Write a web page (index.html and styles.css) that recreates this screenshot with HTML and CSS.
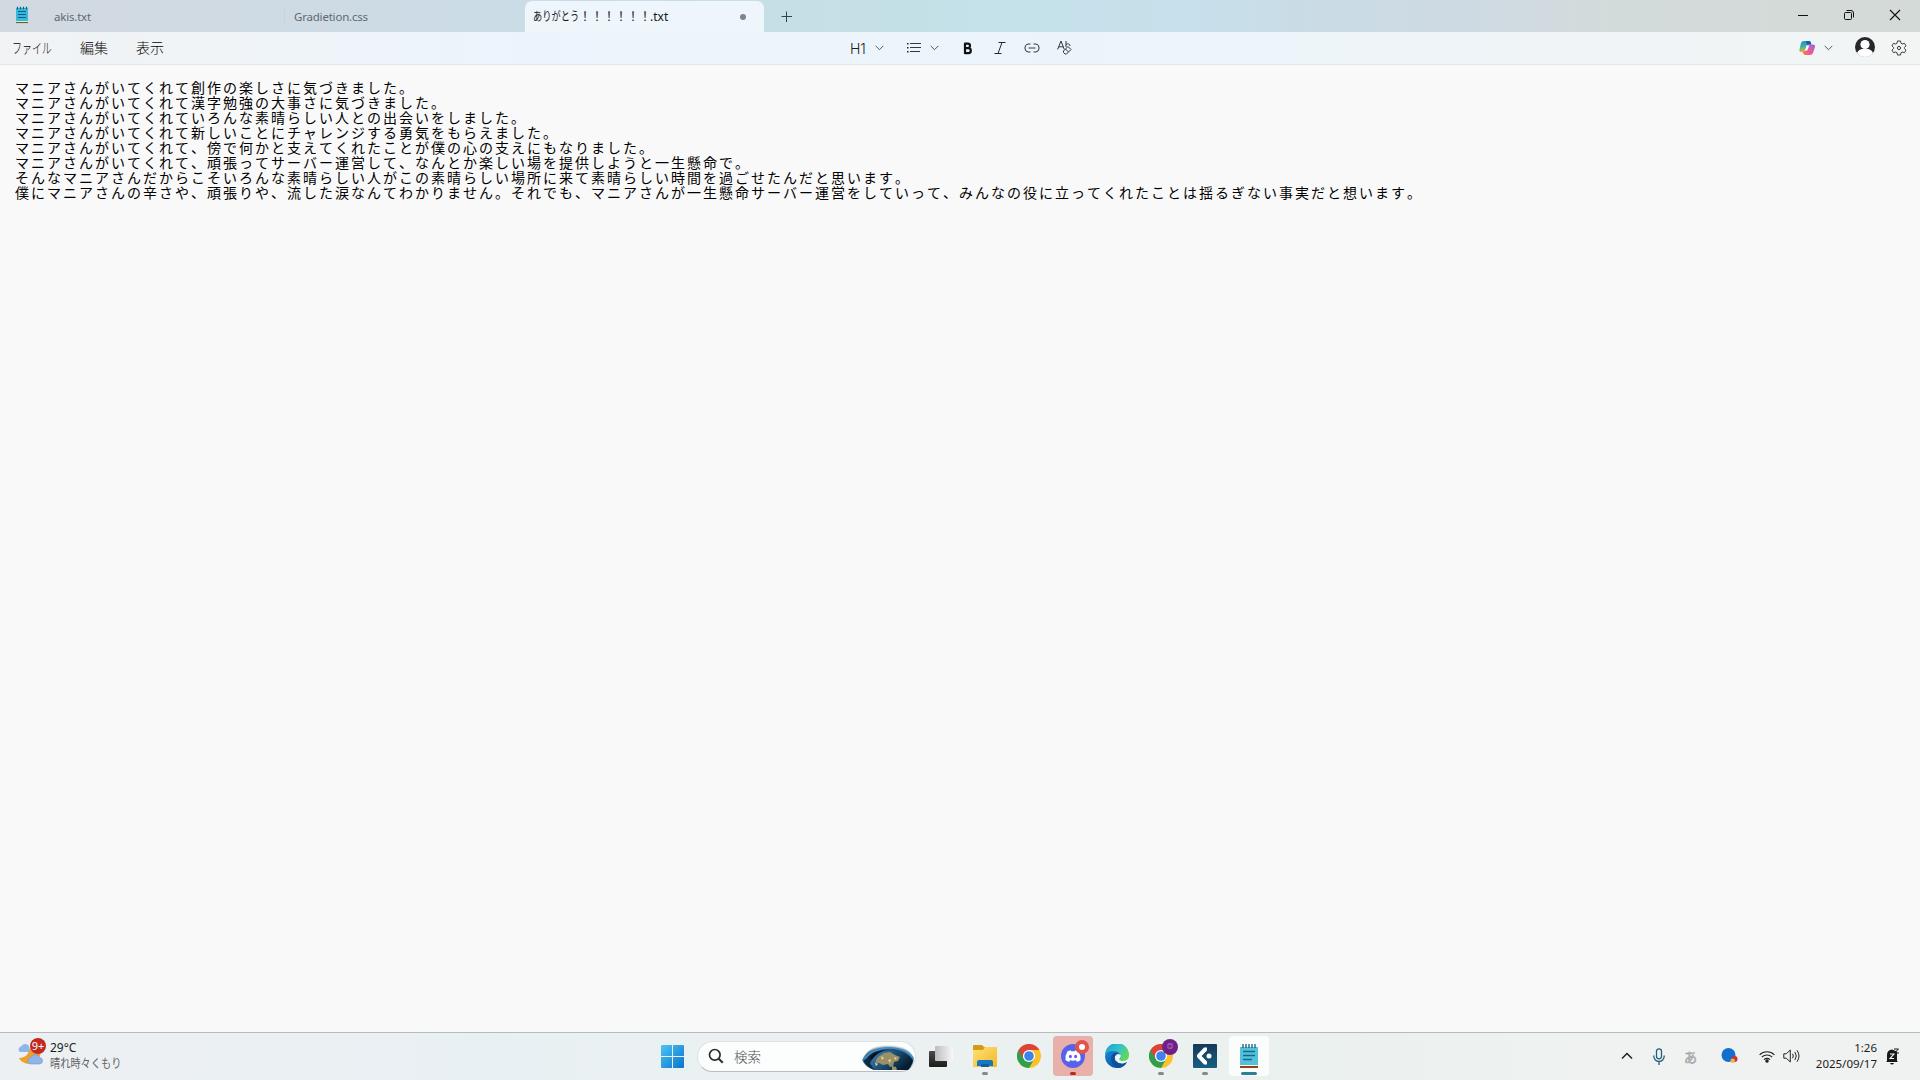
FILE: index.html
```html
<!DOCTYPE html>
<html lang="ja">
<head>
  <meta charset="UTF-8" />
  <meta name="viewport" content="width=device-width, initial-scale=1.0"/>
  <title>ありがとう！！！！！！.txt</title>
  <link rel="stylesheet" href="styles.css">
</head>
<body>

  <header class="titlebar">
    <svg class="app-icon" width="14" height="18" viewBox="0 0 14 18">
      <rect x="1" y="2" width="12" height="14" fill="#38b8dc"/>
      <path d="M1 15.5h12" stroke="#eef6da" stroke-width="1"/>
      <path d="M1 16.5h12" stroke="#6c6328" stroke-width="1.2"/>
      <path d="M2.5 .8v2.4M5.5 .8v2.4M8.5 .8v2.4M11.5 .8v2.4" stroke="#0b607c" stroke-width="1.2"/>
      <path d="M3 5.5h8M3 8.5h8M3 11.5h8" stroke="#07617f" stroke-width="1"/>
    </svg>
    <div class="tab">akis.txt</div>
    <div class="tab tab-second">Gradietion.css</div>
    <div class="tab tab-active">
      <span class="narrow tab-kana">ありがとう</span><span class="tab-marks">！！！！！！</span>.txt
      <i class="unsaved"></i>
    </div>
    <svg class="new-tab" width="12" height="12" viewBox="0 0 12 12"><path d="M5.5 .5v10.500M.5 5.500h10.500" stroke="#33424a" fill="none"/></svg>
    <div class="window-controls">
      <svg width="12" height="12" viewBox="0 0 12 12"><path d="M1 6.5h10" stroke="#111" fill="none"/></svg>
      <svg width="12" height="12" viewBox="0 0 12 12" fill="none" stroke="#111"><rect x="1.5" y="3.5" width="7" height="7" rx="1"/><path d="M3.5 1.5H8a2.5 2.5 0 0 1 2.5 2.5v4.500"/></svg>
      <svg width="12" height="12" viewBox="0 0 12 12"><path d="M1 1l10 10M11 1L1 11" stroke="#111" stroke-width="1.1" fill="none"/></svg>
    </div>
  </header>

  <nav class="menubar">
    <div class="menus">
      <span class="menu-file"><span class="narrow menu-kana">ファイル</span></span>
      <span class="menu-item">編集</span>
      <span class="menu-item">表示</span>
    </div>
    <div class="format">
      <span class="heading">H1</span>
      <svg class="chev" width="9" height="6" viewBox="0 0 9 6"><path d="M.7.9l3.800 3.800L8.300.9"/></svg>
      <svg class="list" width="16" height="12" viewBox="0 0 16 12"><path d="M4 1.500h11M4 5.500h11M4 9.500h10" stroke="#333b40" fill="none"/><path d="M1 1h1.500v1.500H1zM1 5h1.500v1.500H1zM1 9h1.500v1.500H1z" fill="#222"/></svg>
      <svg class="chev" width="9" height="6" viewBox="0 0 9 6"><path d="M.7.9l3.800 3.800L8.300.9"/></svg>
      <svg class="bold" width="10" height="13" viewBox="0 0 10 13"><path d="M2 1.700h2.800a2.200 2.200 0 0 1 0 4.400H2zM2 6.200h3.300a2.500 2.500 0 0 1 0 5H2z" stroke="#111" stroke-width="2.200" fill="none" stroke-linejoin="round"/></svg>
      <svg class="italic" width="12" height="14" viewBox="0 0 12 14"><path d="M4.500 1.500h7M.5 12.500h7M8 1.500L4 12.500" stroke="#222a2e" fill="none"/></svg>
      <svg class="link" width="16" height="10" viewBox="0 0 16 10"><path d="M6.500 1H5a4 4 0 0 0 0 8h1.500M9.500 1H11a4 4 0 0 1 0 8H9.500M4.500 5h7" stroke="#343c40" stroke-width="1.100" fill="none"/></svg>
      <svg class="clear" width="16" height="16" viewBox="0 0 16 16" fill="none" stroke="#2d3539"><path d="M.6 9.500L4 1l3.300 8.500M1.800 6.800h4.500M9 1v6M9 5c1-1.900 4-1.500 4 1M6.500 11l4.500-4.500 3 3-4.500 4.500H8l-1.500-1.500zM8.500 9l3 3"/></svg>
    </div>
    <div class="account">
      <svg width="18" height="16" viewBox="0 0 18 16">
        <defs>
          <linearGradient id="copilot-a" x1="0" y1="0" x2=".3" y2="1"><stop offset="0" stop-color="#168bd0"/><stop offset=".5" stop-color="#35aeb0"/><stop offset="1" stop-color="#e9bd25"/></linearGradient>
          <linearGradient id="copilot-b" x1="1" y1="0" x2="0" y2="1"><stop offset="0" stop-color="#9569e5"/><stop offset=".5" stop-color="#e45a9e"/><stop offset="1" stop-color="#ff7940"/></linearGradient>
        </defs>
        <path d="M6 1h5q1.500 0 2 2l.3 1.500H11q-2 0-2.500 2L7.500 10q-.5 2-2.500 2H3Q1 12 1.500 9.500L3 3Q3.700 1 6 1z" fill="url(#copilot-a)"/>
        <path d="M12 15H7.500q-2 0-2.500-2l-.3-1.500H6q1.700 0 2.200-2l1-3q.5-2 2.500-2H15q2.500 0 2 2.500l-2 6Q14.300 15 12 15z" fill="url(#copilot-b)"/>
        <path d="M8 1h3q1.500 0 2 2l.3 1.500H11q-1.200 0-1.800 1z" fill="#1759b7"/>
        <path d="M8.700 5.500h2.600L9.300 10.500H6.900z" fill="#f5f7fa"/>
      </svg>
      <svg class="chev" width="9" height="6" viewBox="0 0 9 6"><path d="M.7.9l3.800 3.800L8.300.9"/></svg>
      <svg class="avatar" width="20" height="20" viewBox="0 0 20 20"><circle cx="10" cy="10" r="10" fill="#24282a"/><circle cx="10" cy="7.500" r="4.600" fill="#fff"/><path d="M2 16q1.500-3.500 5-4h6q3.500.5 5 4a10 10 0 0 1-16 0z" fill="#fff"/></svg>
      <svg width="16" height="16" viewBox="0 0 16 16" fill="none" stroke="#3a3d3e" stroke-linejoin="round"><path d="M6.500 1h3l.5 2.200 1.300.8 2.200-.7L15 5.900 13.400 7.500v1L15 10.100l-1.500 2.600-2.200-.7-1.300.8-.5 2.200h-3L6 12.800 4.700 12l-2.200.7L1 10.100l1.600-1.600v-1L1 5.900l1.500-2.600 2.200.7L6 3.200z"/><circle cx="8" cy="8" r="1.600"/></svg>
    </div>
  </nav>

  <main class="editor">
    <p>マニアさんがいてくれて創作の楽しさに気づきました。</p>
    <p>マニアさんがいてくれて漢字勉強の大事さに気づきました。</p>
    <p>マニアさんがいてくれていろんな素晴らしい人との出会いをしました。</p>
    <p>マニアさんがいてくれて新しいことにチャレンジする勇気をもらえました。</p>
    <p>マニアさんがいてくれて、傍で何かと支えてくれたことが僕の心の支えにもなりました。</p>
    <p>マニアさんがいてくれて、頑張ってサーバー運営して、なんとか楽しい場を提供しようと一生懸命で。</p>
    <p>そんなマニアさんだからこそいろんな素晴らしい人がこの素晴らしい場所に来て素晴らしい時間を過ごせたんだと思います。</p>
    <p>僕にマニアさんの辛さや、頑張りや、流した涙なんてわかりません。それでも、マニアさんが一生懸命サーバー運営をしていって、みんなの役に立ってくれたことは揺るぎない事実だと想います。</p>
  </main>

  <footer class="taskbar">
    <div class="weather">
      <div class="weather-icon">
        <svg width="27" height="28" viewBox="0 0 27 28">
          <path d="M22 9a10 10 0 0 1-20 11q8 0 10-7z" fill="#eda02c"/>
          <path d="M12 11l11-2v8H12z" fill="#eda02c"/>
          <path d="M3 14a3 3 0 0 1 1-5.500 4.500 4.500 0 0 1 8.500 1.500v4z" fill="#8fb6ea"/>
          <path d="M13 26a3.500 3.500 0 0 1 .5-6.500 5 5 0 0 1 9 0 3.300 3.300 0 0 1 .5 6.500z" fill="#91b4e8" stroke="#6f98d4" stroke-width=".6"/>
        </svg>
        <span class="weather-badge">9+</span>
      </div>
      <div class="weather-text">
        <div>29°C</div>
        <div class="narrow weather-desc">晴れ時々くもり</div>
      </div>
    </div>

    <div class="apps">
      <svg class="start" width="24" height="24" viewBox="0 0 24 24">
        <defs><linearGradient id="win" x1="0" y1="0" x2="1" y2="1"><stop offset="0" stop-color="#4cc5f3"/><stop offset="1" stop-color="#0873cc"/></linearGradient></defs>
        <path d="M2 1H12V12H1V2a1 1 0 0 1 1-1zM13 1h10a1 1 0 0 1 1 1v10H13zM1 13h11v11H2a1 1 0 0 1-1-1zM13 13h11v10a1 1 0 0 1-1 1H13z" fill="url(#win)"/>
      </svg>
      <div class="search">
        <svg width="16" height="16" viewBox="0 0 16 16"><circle cx="6.800" cy="6.800" r="5.300" fill="none" stroke="#292d2f" stroke-width="1.700"/><path d="M10.700 10.700l4 4" stroke="#292d2f" stroke-width="2"/></svg>
        <span>検索</span>
        <svg class="earth" width="54" height="28" viewBox="0 0 54 28">
          <defs>
            <radialGradient id="sky" cx=".5" cy=".62" r=".6"><stop offset=".6" stop-color="#06121e"/><stop offset=".8" stop-color="#38536b" stop-opacity=".75"/><stop offset="1" stop-color="#dbe6ec" stop-opacity="0"/></radialGradient>
            <linearGradient id="globe" x1="0" y1="0" x2="1" y2=".5"><stop offset="0" stop-color="#3f8fca"/><stop offset=".5" stop-color="#1e527c"/><stop offset="1" stop-color="#061d31"/></linearGradient>
          </defs>
          <path d="M1 17Q8 2 26 1q20 0 27 14 0 6-5 12H13Q4 24 1 17z" fill="url(#sky)"/>
          <path d="M2 17Q5 24 13 27h8L9 15z" fill="#0b2d46"/>
          <path d="M9 20Q16 7 30 7q15 0 22 10-1 6-5 10H13z" fill="url(#globe)"/>
          <path d="M2 17Q12 5 29 5q16 0 23 10" fill="none" stroke="#2e94dc" stroke-width="1.500"/>
          <path d="M17 14l6-4 6-1 5 3 5 2-2 4-4 1-1 4-3 1-2-3-5 1-4-2-4 1 1-4zM31 23l4 1 1 3h-5z" fill="#9a9067"/>
          <path d="M20 13l3 2-2 2zM27 17l3-1-1 4zM14 20l3 1-2 2zM33 14l3 1-2 2z" fill="#f1d28a"/>
        </svg>
      </div>
      <svg class="taskview" width="26" height="24" viewBox="0 0 26 24">
        <defs>
          <linearGradient id="tv-back" x1="0" y1="0" x2="0" y2="1"><stop offset="0" stop-color="#4a4a4a"/><stop offset="1" stop-color="#1c1c1c"/></linearGradient>
          <linearGradient id="tv-front" x1="0" y1="0" x2="1" y2="0"><stop offset="0" stop-color="#bcbcbc"/><stop offset="1" stop-color="#f8f8f8"/></linearGradient>
        </defs>
        <rect x="1" y="7" width="18" height="16" rx="1" fill="url(#tv-back)"/><rect x="7" y="2" width="18" height="15" rx="1" fill="url(#tv-front)"/>
      </svg>

      <div class="app running">
        <svg width="24" height="24" viewBox="0 0 24 24">
          <defs><linearGradient id="folder" x1="0" y1="0" x2="1" y2="1"><stop offset="0" stop-color="#ffe07b"/><stop offset="1" stop-color="#f2b821"/></linearGradient></defs>
          <path d="M0 2q0-1 1-1h8l2 2h12v5H0z" fill="#d69a14"/><path d="M0 6h10l2-3h11q1 0 1 1v18q0 1-1 1H1q-1 0-1-1z" fill="url(#folder)"/>
          <path d="M4 22v-4q0-2 2-2h12q2 0 2 2v4z" fill="#1778c0"/><path d="M8 21q0-1 1-1h6q1 0 1 1v2H8z" fill="#0f5f9f"/>
        </svg>
      </div>
      <div class="app">
        <svg width="24" height="24" viewBox="0 0 24 24">
          <g id="chrome"><circle cx="12" cy="12" r="12" fill="#fbc22b"/><path d="M12 12L1.600 6A12 12 0 0 0 12 24l5.200-9z" fill="#2f9e4f"/><path d="M12 6h10.400A12 12 0 0 0 1.600 6l5.200 9z" fill="#dd4437"/><circle cx="12" cy="12" r="6.100" fill="#fff"/><circle cx="12" cy="12" r="4.800" fill="#3d83ed"/></g>
        </svg>
      </div>
      <div class="app running alert">
        <svg width="24" height="24" viewBox="0 0 24 24">
          <circle cx="12" cy="12" r="12" fill="#5662e9"/>
          <path d="M6.500 7.300Q8 6.500 9.700 6.200l.6 1h3.400l.6-1q1.700.3 3.200 1.100Q20 11.500 19.500 16q-1.700 1.400-3.700 1.800l-.9-1.500q-2.900.8-5.800 0l-.9 1.500Q6.200 17.400 4.500 16 4 11.500 6.500 7.300z" fill="#fff"/>
          <ellipse cx="9.400" cy="12.500" rx="1.500" ry="1.700" fill="#5662e9"/><ellipse cx="14.600" cy="12.500" rx="1.500" ry="1.700" fill="#5662e9"/>
        </svg>
        <i class="badge badge-live"></i>
      </div>
      <div class="app">
        <svg width="24" height="24" viewBox="0 0 24 24">
          <defs>
            <linearGradient id="edge-top" x1="0" y1="0" x2="1" y2=".5"><stop offset="0" stop-color="#1a9bd7"/><stop offset=".6" stop-color="#32c5c8"/><stop offset="1" stop-color="#62d65c"/></linearGradient>
            <linearGradient id="edge-low" x1="0" y1="0" x2="1" y2="1"><stop offset="0" stop-color="#1587d6"/><stop offset="1" stop-color="#0b438e"/></linearGradient>
          </defs>
          <path d="M0 11A12 12 0 0 1 24 11q0 6-6 6-4 0-4-2 2-2 1-5Q9 4 0 11z" fill="url(#edge-top)"/>
          <path d="M0 12Q1 7 8 7q6 0 7.500 4Q12 9 10 12q-2 5 4 8 4 1 8-2-3 6-10 6A12 12 0 0 1 0 12z" fill="url(#edge-low)"/>
          <path d="M6 14q1-6 7-5-5 3-2.500 7.500Q14 21 22 18q-3 5-8 6-8-2-8-10z" fill="#0d4f9d"/>
          <path d="M11 12q2-3 4.500-1 .5 2-1.500 4 0 2 4 2 3 0 5-1.500-2 4-6 4-6-1-6-7.500z" fill="#eef6f7"/>
        </svg>
      </div>
      <div class="app running">
        <svg width="24" height="24" viewBox="0 0 24 24"><use href="#chrome"/></svg>
        <i class="badge badge-profile">◎</i>
      </div>
      <div class="app running">
        <svg width="24" height="24" viewBox="0 0 24 24">
          <defs><linearGradient id="navy" x1="0" y1="0" x2="0" y2="1"><stop offset="0" stop-color="#143a58"/><stop offset="1" stop-color="#185d83"/></linearGradient></defs>
          <rect width="24" height="24" rx="1" fill="url(#navy)"/><path d="M11 3.500h3v3L8.500 12l5.500 5.500v3h-3L4 13v-2z" fill="#fff"/><circle cx="16" cy="12" r="2.500" fill="#fff"/>
        </svg>
      </div>
      <div class="app running current">
        <svg width="20" height="26" viewBox="0 0 20 26">
          <path d="M1 4h18v18H1z" fill="#53c1dc"/><path d="M1 22h18v1H1z" fill="#fff4dc"/><path d="M1 23h18v2H1z" fill="#91421c"/>
          <path d="M4 1v4M7 1v4M10 1v4M13 1v4M16 1v4" stroke="#175b72" stroke-width="1.300"/><path d="M4 8.500h12M4 12.500h12M4 16.500h9" stroke="#126a88" stroke-width="1.400"/>
        </svg>
      </div>
    </div>

    <div class="tray">
      <svg class="tray-up" width="12" height="8" viewBox="0 0 12 8"><path d="M1 6.500l5-5 5 5" fill="none" stroke="#222" stroke-width="1.500"/></svg>
      <svg class="tray-mic" width="12" height="17" viewBox="0 0 12 17" fill="none" stroke="#236079" stroke-width="1.300"><rect x="3.500" y=".8" width="5" height="10" rx="2.500"/><path d="M.8 7.500v.8a5.200 5.200 0 0 0 10.400 0v-.8M6 13.500V17"/></svg>
      <span class="ime">あ</span>
      <svg class="tray-ball" width="17" height="16" viewBox="0 0 17 16"><circle cx="7.500" cy="7" r="7" fill="#126fd0"/><circle cx="13.500" cy="11" r="3" fill="#c53030"/><circle cx="11.700" cy="12.700" r="2.300" fill="#f0b548"/></svg>
      <svg class="tray-wifi" width="16" height="13" viewBox="0 0 16 13" fill="none" stroke="#222" stroke-width="1.100"><path d="M.6 4.800a10.400 10.400 0 0 1 14.800 0M2.800 7.200a7.300 7.300 0 0 1 10.400 0M5 9.600a4.200 4.200 0 0 1 6 0"/><circle cx="8" cy="11" r="1.200" fill="#222"/></svg>
      <svg class="tray-volume" width="17" height="14" viewBox="0 0 17 14" fill="none" stroke="#222" stroke-linejoin="round"><path d="M.8 4.800h2.500L7.300 1v12L3.300 9.200H.8zM9.600 4.800q1.400 2.200 0 4.400M11.900 3q2.800 4 0 8M14 1.300q4 5.700 0 11.400"/></svg>
      <div class="clock"><div>1:26</div><div>2025/09/17</div></div>
      <svg class="tray-bell" width="15" height="17" viewBox="0 0 15 17"><path d="M2 13V7q0-5 5-5.500l5 2V13l1 1H1z" fill="#191919"/><path d="M5 15h4q-.5 1.500-2 1.500T5 15z" fill="#191919"/><path d="M5 6h4L5 10.500h4" fill="none" stroke="#fff" stroke-width="1.100"/><path d="M9 1h4.500L9.500 5H14" fill="none" stroke="#191919"/></svg>
    </div>
  </footer>

</body>
</html>
```
FILE: styles.css
```css
:root {
  --editor: #f9f9f9;
  --ink: #1b1e20;
  --muted: #5f696f;
}

* {
  box-sizing: border-box;
}

body {
  margin: 0;
  height: 100vh;
  display: flex;
  flex-direction: column;
  overflow: hidden;
  font-family: 'Noto Sans', 'Noto Sans CJK JP', sans-serif;
  font-size: 12px;
  color: var(--ink);
  background: var(--editor);
}

svg {
  display: block;
  flex: none;
}

/* squeezed kana, like the narrow UI face */
.narrow {
  display: inline-block;
  white-space: nowrap;
  transform-origin: left center;
}

/* title bar */
.titlebar {
  height: 32px;
  flex: none;
  display: flex;
  align-items: center;
  background: linear-gradient(90deg, #d2d9e0 0, #cddbe5 20%, #c9dde7 32%, #c4e0e6 45%, #c5e1ea 54%, #c7e0eb 62%, #cadbe5 69%, #cfdae2 78%, #d3dbda 84%, #d4dad8);
}

.app-icon {
  margin: 0 24px 8px 15px;
  align-self: flex-end;
}

.tab {
  width: 231px;
  padding: 2px 0 0 1px;
  font-size: 11.500px;
  line-height: 30px;
  letter-spacing: -.2px;
  color: var(--muted);
}

.tab-second {
  width: 241px;
  height: 18px;
  padding: 0 0 0 9px;
  border-left: 1px solid #c5d2d9;
  line-height: 20px;
}

.tab-active {
  width: 239px;
  height: 31px;
  margin-top: 1px;
  padding: 1px 0 0 8px;
  display: flex;
  align-items: center;
  border-radius: 7px 7px 0 0;
  background: #eef5fb;
  color: #15191b;
  font-size: 12px;
  letter-spacing: 0;
}

.tab-kana {
  width: 46px;
  transform: scaleX(.77);
}

.tab-marks {
  width: 71px;
}

.unsaved {
  width: 6px;
  height: 6px;
  margin: 0 18px 0 auto;
  border-radius: 50%;
  background: #7d858a;
}

.new-tab {
  margin: 1px 0 0 17px;
}

.window-controls {
  display: flex;
  gap: 34px;
  margin: 0 19px 3px auto;
}

/* menu bar */
.menubar {
  height: 33px;
  flex: none;
  display: grid;
  grid-template-columns: 849px 1fr auto;
  align-items: center;
  border-bottom: 1px solid #e0e6e9;
  background: linear-gradient(90deg, #f1f3f5 0, #eff4f8 15%, #ebf4fd 28%, #eef5fa 36%, #ecf4fc 50%, #edf5fa 65%, #f0f4f7 82%, #f2f5f4);
}

.menus {
  display: flex;
  padding: 0 0 2px 12px;
  font-size: 14px;
  font-weight: 300;
  color: #000;
}

.menu-file {
  width: 68px;
}

.menu-kana {
  transform: scaleX(.71);
}

.menu-item {
  width: 56px;
}

.format {
  display: flex;
  align-items: center;
}

.heading {
  width: 19px;
  padding-left: 1px;
  font-family: Inter, sans-serif;
  font-size: 14px;
  font-weight: 300;
}

.chev {
  fill: none;
  stroke: #50585c;
}

.format .chev {
  margin-left: 7px;
}

.list {
  margin-left: 22px;
}

.format .list + .chev {
  margin-left: 8px;
}

.bold {
  margin-left: 24px;
}

.italic {
  margin-left: 21px;
}

.link {
  margin-left: 18px;
}

.clear {
  margin-left: 17px;
}

.account {
  display: flex;
  align-items: center;
  margin-right: 13px;
}

.account .chev {
  margin-left: 8px;
}

.avatar {
  margin: 0 16px 2px 22px;
}

/* text area */
.editor {
  flex: 1;
  padding: 15px 0 0 15px;
  font-family: 'Noto Sans CJK JP', sans-serif;
  font-size: 14px;
  line-height: 15px;
  letter-spacing: 2px;
  font-kerning: none;
  text-spacing-trim: space-all;
  color: #000;
}

.editor p {
  margin: 0;
  white-space: nowrap;
}

/* taskbar */
.taskbar {
  height: 48px;
  flex: none;
  display: grid;
  grid-template-columns: 660px 1fr auto;
  border-top: 1px solid #b7babc;
  background: linear-gradient(90deg, #edf0f2 0, #e9f0f3 25%, #ebf1f2 45%, #ebf1ee 68%, #eff2f1 85%, #f0f2f1);
}

.weather {
  display: flex;
  padding: 5px 0 0 17px;
}

.weather-icon {
  position: relative;
  width: 33px;
}

.weather-badge {
  position: absolute;
  top: 0;
  left: 13px;
  width: 16px;
  height: 16px;
  border-radius: 50%;
  background: #bf2b20;
  color: #fff;
  font-size: 11px;
  line-height: 16px;
  text-align: center;
}

.weather-text {
  padding-top: 2px;
  line-height: 16px;
}

.weather-desc {
  color: #5d6264;
  transform: scaleX(.85);
}

.apps {
  display: flex;
  align-items: center;
  padding-bottom: 1px;
}

.search {
  position: relative;
  width: 219px;
  height: 31px;
  margin-left: 13px;
  padding: 0 0 1px 10px;
  display: flex;
  align-items: center;
  gap: 10px;
  border: 1px solid #dde2e3;
  border-bottom-color: #b9bfc1;
  border-radius: 16px;
  background: #fcfdfd;
  color: #4c5154;
  font-size: 13.500px;
  font-weight: 300;
}

.earth {
  position: absolute;
  right: 0;
  top: 1px;
}

.taskview {
  margin: 0 9px 0 12px;
}

.app {
  position: relative;
  width: 40px;
  height: 40px;
  margin: 0 2px;
  display: flex;
  align-items: center;
  justify-content: center;
  border-radius: 4px;
}

.running::after {
  content: "";
  position: absolute;
  bottom: 1px;
  left: 17px;
  width: 6px;
  height: 3px;
  border-radius: 2px;
  background: #858989;
}

.alert {
  background: #e8afab;
}

.alert::after {
  background: #b72b20;
}

.current {
  background: #fbfcfc;
}

.current::after {
  left: 12px;
  width: 16px;
  background: #307e91;
}

.badge {
  position: absolute;
  border-radius: 50%;
  font-style: normal;
}

.badge-live {
  top: 4px;
  right: 4px;
  width: 14px;
  height: 14px;
  border: 4px solid #e1544c;
  background: #fff;
}

.badge-profile {
  top: 3px;
  right: 3px;
  width: 16px;
  height: 16px;
  background: #701f88;
  color: #e7c7ef;
  font-size: 6px;
  line-height: 15px;
  text-align: center;
}

.tray {
  display: flex;
  align-items: center;
  padding: 0 20px 1px 0;
}

.tray-mic {
  margin-left: 20px;
}

.ime {
  width: 14px;
  margin-left: 19px;
  font-size: 13px;
  color: #f5f5f5;
  -webkit-text-stroke: .6px #8f9393;
}

.tray-ball {
  margin-left: 23px;
}

.tray-wifi {
  margin-left: 21px;
}

.tray-volume {
  margin-left: 8px;
}

.clock {
  width: 77px;
  font-size: 11.500px;
  line-height: 16px;
  text-align: right;
}

.tray-bell {
  margin-left: 8px;
}
```
